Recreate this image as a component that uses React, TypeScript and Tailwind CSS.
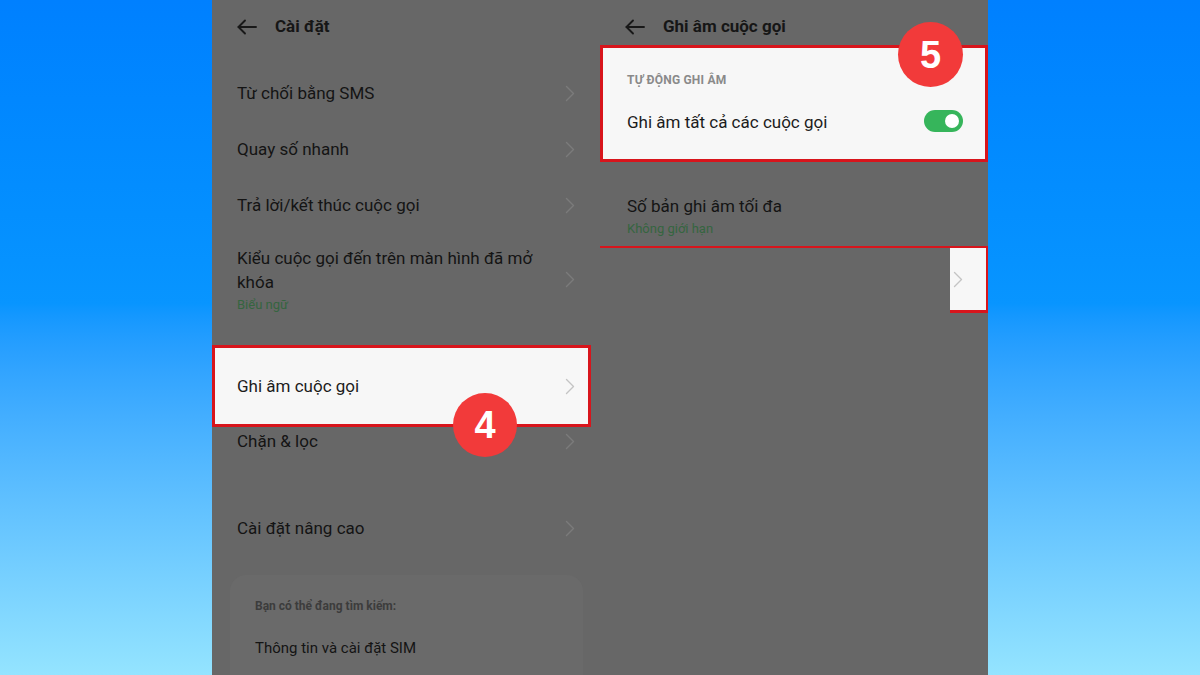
import React from "react";

const RED = "border-[#d8151c]";

function Arrow() {
  return (
    <svg width="20" height="16" viewBox="0 0 20 16" fill="none" stroke="#181818" strokeWidth="1.9" strokeLinecap="round" strokeLinejoin="round">
      <line x1="1.5" y1="8" x2="19" y2="8" />
      <polyline points="8,1.5 1.5,8 8,14.5" />
    </svg>
  );
}

function Chevron({ color = "#7b7b7b" }: { color?: string }) {
  return (
    <svg width="10" height="17" viewBox="0 0 10 17" fill="none" stroke={color} strokeWidth="1.4" strokeLinecap="round" strokeLinejoin="round">
      <polyline points="1.5,1.5 8.5,8.5 1.5,15.5" />
    </svg>
  );
}

function Row({ label, h = "h-[56px]" }: { label: string; h?: string }) {
  return (
    <div className={`${h} flex items-center justify-between pl-[25px] pr-[25px]`}>
      <span className="text-[17px] leading-[24px] text-[#141414]">{label}</span>
      <Chevron />
    </div>
  );
}

function Badge({ n, className }: { n: string; className: string }) {
  return (
    <div
      className={`absolute rounded-full bg-[#f23a3a] flex items-center justify-center text-white font-bold text-[38px] leading-none ${className}`}
      style={{ fontFamily: '"Liberation Sans", Arial, sans-serif' }}
    >
      {n}
    </div>
  );
}

export default function App() {
  return (
    <div
      className="w-[1200px] h-[675px] overflow-hidden flex justify-center bg-linear-to-b from-[#0080ff] via-[#0895ff] via-45% to-[#94e4ff]"
      style={{ fontFamily: 'Roboto, "Noto Sans", sans-serif' }}
    >
      <div className="w-[776px] h-full bg-[#676767] flex">
        {/* Left column */}
        <div className="w-[388px] shrink-0">
          <div className="h-[54px] flex items-center pl-[25px] gap-[18px]">
            <Arrow />
            <span className="text-[17px] font-bold text-[#161616]">Cài đặt</span>
          </div>
          <div className="h-[11px]" />
          <Row label="Từ chối bằng SMS" />
          <Row label="Quay số nhanh" />
          <Row label="Trả lời/kết thúc cuộc gọi" />
          <div className="h-[112px] pt-[13px] pl-[25px] pr-[25px]">
            <div className="flex items-center justify-between">
              <div className="flex flex-col w-[310px]">
                <span className="text-[17px] leading-[24px] text-[#141414]">Kiểu cuộc gọi đến trên màn hình đã mở khóa</span>
                <span className="text-[13px] leading-[14px] mt-[4px] text-[#356540]">Biểu ngữ</span>
              </div>
              <Chevron />
            </div>
          </div>
          <div className={`relative w-[379px] h-[82px] bg-[#f7f7f7] border-[3px] ${RED} flex items-center justify-between pl-[22px] pr-[13px]`}>
            <span className="text-[17px] leading-[24px] text-[#1c1c1c]">Ghi âm cuộc gọi</span>
            <Chevron color="#c4c4c4" />
            <Badge n="4" className="w-[64px] h-[64px] left-[238px] top-[45px]" />
          </div>
          <Row label="Chặn & lọc" h="h-[28px]" />
          <div className="h-[45px]" />
          <Row label="Cài đặt nâng cao" />
          <div className="h-[19px]" />
          <div className="ml-[18px] w-[353px] h-[140px] rounded-[16px] bg-[#6a6a6a] pl-[25px] pt-[23px] flex flex-col">
            <span className="text-[12px] leading-[16px] font-bold text-[#3c3c3c]">Bạn có thể đang tìm kiếm:</span>
            <span className="mt-[24px] text-[15px] leading-[20px] text-[#141414]">Thông tin và cài đặt SIM</span>
          </div>
        </div>

        {/* Right column */}
        <div className="w-[388px] shrink-0">
          <div className="h-[45px] pt-[9px] flex items-center pl-[25px] gap-[18px]">
            <Arrow />
            <span className="text-[17px] font-bold text-[#161616]">Ghi âm cuộc gọi</span>
          </div>
          <div className={`relative w-[388px] h-[117px] bg-[#f7f7f7] border-[3px] ${RED} pl-[24px] pr-[22px] pt-[24px] flex flex-col`}>
            <span className="text-[12px] leading-[16px] font-bold tracking-[0.2px] text-[#8a8a8a]">TỰ ĐỘNG GHI ÂM</span>
            <div className="mt-[22px] flex items-center justify-between">
              <span className="text-[17px] leading-[24px] text-[#1c1c1c]">Ghi âm tất cả các cuộc gọi</span>
              <div className="w-[39px] h-[22px] rounded-full bg-[#36b55b] flex items-center justify-end pr-[4px] -mt-[3px]">
                <div className="w-[14px] h-[14px] rounded-full bg-white" />
              </div>
            </div>
            <Badge n="5" className="w-[65px] h-[65px] left-[295px] -top-[26px]" />
          </div>
          <div className={`h-[86px] pt-[32px] pl-[27px] flex flex-col border-b-[2px] ${RED}`}>
            <span className="text-[17px] leading-[24px] text-[#141414]">Số bản ghi âm tối đa</span>
            <span className="text-[13px] leading-[14px] mt-[4px] text-[#356540]">Không giới hạn</span>
          </div>
          <div className="flex justify-end">
            <div className={`w-[38px] h-[65px] bg-[#f7f7f7] border-r-[2px] border-b-[3px] ${RED} flex items-center pl-[3px]`}>
              <Chevron color="#c4c4c4" />
            </div>
          </div>
        </div>
      </div>
    </div>
  );
}
